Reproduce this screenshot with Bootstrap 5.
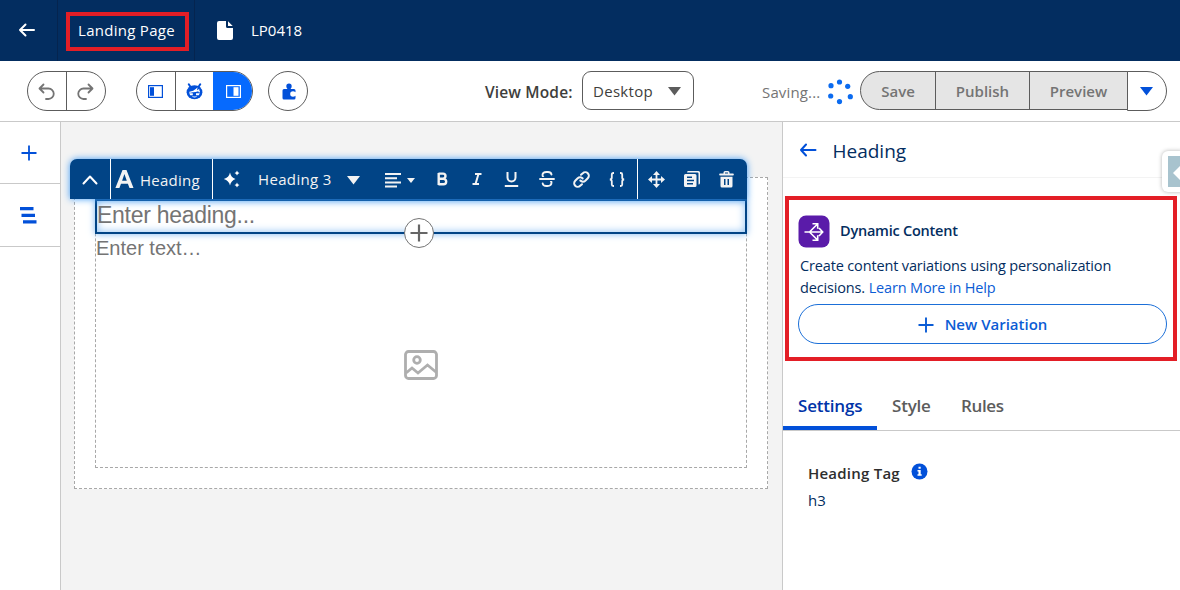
<!DOCTYPE html>
<html lang="en">
<head>
<meta charset="utf-8">
<meta name="viewport" content="width=device-width, initial-scale=1">
<title>Landing Page - LP0418</title>
<link href="https://cdn.jsdelivr.net/npm/bootstrap@5.3.0/dist/css/bootstrap.min.css" rel="stylesheet">
<style>
  body { font-family: "Open Sans", "Noto Sans", sans-serif; font-size: 15px; color: #032d60; height: 590px; overflow: hidden; letter-spacing: 0; background: #fff; line-height: 20px; }
  svg { display: block; flex: none; }
  button { font: inherit; letter-spacing: inherit; padding: 0; background: none; border: 0; color: inherit; }
  .topbar { height: 61px; background: #032d60; color: #fff; }
  .topbar .cell { height: 61px; border-right: 1px solid #05244f; }
  .topbar .back { width: 58px; padding-left: 18px; }
  .topbar .kind { width: 137px; padding: 2px 0 0 8px; }
  .callout { border: 4px solid #e31e26; }
  .kind .callout { width: 123px; height: 39px; padding: 0 2px 3px 0; letter-spacing: .28px; }
  .tools { height: 61px; border-bottom: 1px solid #c9c9c9; padding: 10px 13px 0 27px; }
  .pill { height: 40px; border: 1px solid #5c5c5c; border-radius: 20px; overflow: hidden; }
  .pill > * { height: 38px; display: flex; align-items: center; justify-content: center; }
  .pill > * + * { border-left: 1px solid #5c5c5c; }
  .mode { width: 112px; height: 39px; border: 1px solid #5c5c5c; border-radius: 9px; padding: 0 11px 0 10px; color: #3e3e3c; letter-spacing: .3px; }
  .acts button { height: 39px; background: #e5e5e5; border: 1px solid #5c5c5c; color: #747474; font-weight: 600; }
  .rail { width: 61px; border-right: 1px solid #c9c9c9; }
  .rail .item { height: 62px; border-bottom: 1px solid #c9c9c9; padding-right: 3px; }
  .rail .item + .item { height: 63px; }
  .stage { width: 721px; background: #f3f3f3; padding: 55px 14px 0 13px; }
  .frame { height: 312px; border: 1px dashed #a8a8a8; background: #fff; padding: 0 20px 20px; position: relative; }
  .inner { height: 290px; border: 1px dashed #a8a8a8; border-top: 0; position: relative; font-family: "Liberation Sans", Arial, sans-serif; color: #747474; }
  .field { height: 35px; margin: 0 -1px; border: 2px solid #014486; font-size: 23px; letter-spacing: -.28px; line-height: 29px; box-shadow: 0 0 7px #7db8f2, inset 0 0 8px #8cc0f4; }
  .blockbar { position: absolute; left: -5px; top: -19px; width: 677px; height: 40px; background: #014486; color: #f3f3f3; border-radius: 7px 7px 0 0; box-shadow: 0 0 7px #3f9bf5; z-index: 2; letter-spacing: .25px; }
  .blockbar .grp { height: 40px; border-left: 1px solid #fff; }
  .tb { width: 35px; display: flex; justify-content: center; }
  .addbtn { position: absolute; left: 308px; top: 40px; width: 30px; height: 30px; border: 1px solid #747474; border-radius: 50%; background: #fff; z-index: 3; }
  .side { width: 398px; border-left: 1px solid #c9c9c9; position: relative; }
  .sidehead { height: 56px; border-bottom: 1px solid #f3f3f3; padding: 2px 0 0 17px; font-size: 19px; }
  .dyn { height: 165px; margin: 18px 3px 0 2px; padding: 15px 6px 0 9px; }
  .desc { margin: 7px 0 5px 2px; line-height: 22px; font-size: 14.5px; letter-spacing: -.15px; }
  .newvar { width: 369px; height: 40px; border: 1px solid #1b6fd8; border-radius: 20px; color: #0b5cd5; font-weight: 600; }
  .tabs { height: 48px; margin-top: 22px; border-bottom: 1px solid #c9c9c9; font-size: 17px; font-weight: 600; color: #5c5c5c; letter-spacing: -.2px; }
  .tabs .tab { padding-top: 13px; height: 47px; white-space: nowrap; }
  .tabs .on { width: 94px; padding-left: 15px; color: #0033a8; border-bottom: 4px solid #0250d9; }
  .drawer { position: absolute; right: -6px; top: 29px; width: 24px; height: 41px; border-radius: 6px; background: #fff; box-shadow: 0 0 4px rgba(0,0,0,.3); padding: 5px 6px; }
  .drawer span { display: block; height: 31px; background: #a8c3ce; }
  .t { white-space: nowrap; }
</style>
</head>
<body class="d-flex flex-column">
<header class="topbar d-flex flex-shrink-0">
  <div class="cell back d-flex align-items-center"><svg width="18" height="16" viewBox="0 0 18 16" fill="none" stroke="#fff" stroke-width="2" stroke-linecap="round" stroke-linejoin="round" style="margin-bottom:2px"><path d="M16 8H2M7.500 2.500 2 8l5.500 5.500"/></svg></div>
  <div class="cell kind d-flex align-items-center"><div class="callout d-flex align-items-center justify-content-center"><span class="t">Landing Page</span></div></div>
  <div class="d-flex align-items-center" style="padding:0 0 1px 22px"><svg width="16" height="19" viewBox="0 0 16 19" fill="#fff"><path d="M2 0h7v5.500Q9 7 10.500 7H16v10q0 2-2 2H2q-2 0-2-2V2Q0 0 2 0zM11 .3 15.700 5H11.500q-.5 0-.5-.5z"/></svg><span class="t" style="margin-left:18px">LP0418</span></div>
</header>

<div class="tools d-flex flex-shrink-0">
  <div class="pill d-flex" style="width:79px">
    <button style="width:38px;padding:1px 1px 0 0"><svg width="17" height="18" viewBox="0 0 17 18" fill="none" stroke="#747474" stroke-width="1.800" stroke-linecap="round" stroke-linejoin="round"><path d="M5.500 1.500 1.500 5.500l4 4M2 5.500h8.500a5 5 0 0 1 0 10.500H8"/></svg></button>
    <button style="width:39px;padding:1px 1px 0 0"><svg width="17" height="18" viewBox="0 0 17 18" fill="none" stroke="#747474" stroke-width="1.800" stroke-linecap="round" stroke-linejoin="round"><path d="M11.500 1.500l4 4-4 4M15 5.500H6.500a5 5 0 0 0 0 10.500H9"/></svg></button>
  </div>
  <div class="pill d-flex" style="width:117px;margin-left:30px">
    <button style="width:38px;padding-right:1px"><svg width="15" height="13" viewBox="0 0 15 13"><rect x=".6" y=".6" width="13.800" height="11.800" fill="#fff" stroke="#0250d9" stroke-width="1.200"/><rect x="2" y="2.200" width="4" height="8.600" fill="#0250d9"/></svg></button>
    <button style="width:38px"><svg width="17" height="17" viewBox="0 0 17 17"><path d="M2.800 1.300 4.500 4M14.200 1.300 12.500 4" stroke="#0250d9" stroke-width="2" stroke-linecap="round"/><ellipse cx="8.500" cy="9.300" rx="7.900" ry="7" fill="#0250d9"/><path d="M3.400 9.300Q8 9 10.500 6.300q-.3 1.500-1 2 2-.2 3.200-1.200.2 1.500.9 2.200" stroke="#fff" stroke-width="1.300" fill="none"/><path d="M3.200 10.300h3.600v2H4.200zM10 10.300h3.800l-1 2H10zM6.500 13q2 1.200 4 0v1q-2 .8-4 0z" fill="#fff"/></svg></button>
    <button class="flex-fill" style="background:#066afe;border-color:#066afe"><svg width="15" height="13" viewBox="0 0 15 13"><rect x=".6" y=".6" width="13.800" height="11.800" fill="none" stroke="#fff" stroke-width="1.200"/><rect x="7.500" y="2.200" width="5" height="8.600" fill="#fff"/></svg></button>
  </div>
  <div class="pill" style="width:40px;margin-left:15px"><button class="w-100" style="padding-left:1px"><svg width="14" height="17" viewBox="0 0 14 17" fill="#0250d9"><path d="M2 6h3.500Q4.300 4.800 4.300 3.200a2.700 2.700 0 0 1 5.400 0Q9.700 4.800 8.500 6H12q1.500 0 1.500 1.500V9.300Q12.300 8.200 11 8.200a2.800 2.800 0 0 0 0 5.600q1.300 0 2.500-1.100V15q0 1.500-1.500 1.500H2Q.5 16.500.5 15V7.500Q.5 6 2 6z"/></svg></button></div>
  <div class="t fw-semibold" style="margin:11px 0 0 177px;width:97px;color:#3e3e3c;font-size:15.500px;letter-spacing:.15px">View Mode:</div>
  <div class="mode d-flex align-items-center justify-content-between"><span class="t">Desktop</span><svg width="15" height="9" style="margin-top:2px"><path d="M1 0h13L7.500 8.500z" fill="#5c5c5c"/></svg></div>
  <div class="t" style="margin:11px 0 0 68px;width:65px;color:#747474;letter-spacing:.15px">Saving...</div>
  <svg style="margin-top:7px" width="27" height="27" viewBox="0 0 27 27" fill="#0b6bf0"><circle cx="12.500" cy="4" r="2.600"/><circle cx="20.700" cy="8.300" r="2.600"/><circle cx="23.300" cy="18.700" r="2.600"/><circle cx="12.500" cy="23.600" r="2.600"/><circle cx="3.700" cy="18" r="2.600"/><circle cx="4" cy="7.700" r="2.600"/></svg>
  <div class="acts d-flex" style="margin-left:6px">
    <button style="width:76px;border-radius:20px 0 0 20px">Save</button>
    <button style="width:95px;margin-left:-1px">Publish</button>
    <button style="width:99px;margin-left:-1px">Preview</button>
    <button class="d-flex align-items-center justify-content-center" style="width:40px;height:40px;margin-left:-1px;border-radius:0 20px 20px 0;background:#fff"><svg width="14" height="9"><path d="M0 0h13L6.500 8.500z" fill="#0250d9"/></svg></button>
  </div>
</div>

<main class="d-flex flex-fill">
  <nav class="rail flex-shrink-0">
    <div class="item d-flex align-items-center justify-content-center"><svg width="16" height="16" stroke="#0250d9" stroke-width="1.800"><path d="M8 .5v15M.5 8h15"/></svg></div>
    <div class="item d-flex align-items-center justify-content-center" style="padding-top:1px"><svg width="17" height="17" fill="#0250d9"><path d="M0 0h13.500v3.200H0zM1.500 6.700h13.500v3.200H1.500zM3 13.300h13.500v3.200H3z"/></svg></div>
  </nav>
  <section class="stage flex-shrink-0">
    <div class="frame">
      <div class="blockbar d-flex">
        <div class="d-flex align-items-center justify-content-center" style="width:40px;padding-top:2px"><svg width="16" height="10" fill="none" stroke="#fff" stroke-width="2" stroke-linecap="round" stroke-linejoin="round"><path d="m1.500 8.500 6.500-7 6.500 7"/></svg></div>
        <div class="grp d-flex align-items-center" style="width:102px;padding-left:4px"><svg width="19" height="18" viewBox="0 0 19 18" fill="#f3f3f3"><path fill-rule="evenodd" d="M7.500 0h4L18.500 18h-4l-1.600-4.300H6L4.400 18H.4zM9.400 4 7.100 10.700h4.700z"/></svg><span class="t" style="margin-left:6px;padding-top:2px">Heading</span></div>
        <div class="grp d-flex align-items-center" style="width:425px;padding-left:10px">
          <svg width="18" height="18" viewBox="0 0 18 18" fill="#fff"><path d="M7 2.500Q8 7.500 12.500 9 8 10.500 7 15.500 6 10.500 .8 9 6 7.500 7 2.500zM14 .5q.5 2 2.500 2.500Q14.500 3.500 14 5.500 13.500 3.500 11.500 3 13.500 2.500 14 .5zM14 12.500q.5 2 2.500 2.500-2 .5-2.500 2.500-.5-2-2.500-2.500 2-.5 2.500-2.500z"/></svg>
          <span class="t" style="margin-left:17px;width:89px;letter-spacing:.35px">Heading 3</span>
          <svg width="14" height="9" style="margin-top:3px"><path d="M0 0h13L6.500 8.500z" fill="#f3f3f3"/></svg>
          <svg style="margin:2px 0 0 24px" width="17" height="15" fill="#f3f3f3"><path d="M0 0h16v2H0zM0 4.200h12v2H0zM0 8.400h16v2H0zM0 12.600h12v2H0z"/></svg>
          <svg style="margin:3px 9px 0 5px" width="8" height="5"><path d="M0 0h8L4 5z" fill="#f3f3f3"/></svg>
          <div class="tb"><svg width="12" height="14" fill="none" stroke="#f3f3f3" stroke-width="2.400"><path d="M2.500 1.600H7a2.500 2.500 0 0 1 0 5H3M2.500 6.800h5a2.700 2.700 0 0 1 0 5.400h-5M2.700 1v12"/></svg></div>
          <div class="tb"><svg width="10" height="14" fill="none" stroke="#f3f3f3" stroke-width="2"><path d="M3 2h6.500M.5 12H7M6.500 2l-3 10"/></svg></div>
          <div class="tb"><svg width="15" height="15" fill="none" stroke="#f3f3f3" stroke-width="2"><path d="M3.500 0v5.500a4 4 0 0 0 8 0V0M.8 14h13.400"/></svg></div>
          <div class="tb"><svg width="16" height="16" fill="none" stroke="#f3f3f3" stroke-width="1.900" stroke-linecap="round"><path d="M12.500 3.500Q12 1 9 1H7.500q-4 0-4 3 0 3 4.500 4h1q3.500 1 3.500 3.500 0 3.500-4 3.500H7.500Q4 15 3.700 12.500"/><path d="M0 8h16" stroke="#014486" stroke-width="4"/><path d="M1 8h14"/></svg></div>
          <div class="tb"><svg width="17" height="17" viewBox="0 0 17 17" fill="none" stroke="#f3f3f3" stroke-width="2" stroke-linecap="round"><path d="m8 3.800 1.800-1.600a3.500 3.500 0 0 1 5 5L12.300 9.700a3.500 3.500 0 0 1-5-.2M9 13.200l-1.800 1.600a3.500 3.500 0 0 1-5-5L4.700 7.300a3.500 3.500 0 0 1 5 .2"/></svg></div>
          <div class="tb"><svg width="16" height="15" fill="none" stroke="#f3f3f3" stroke-width="1.800"><path d="M5 1H4.300Q2.800 1 2.800 2.500V5.500Q2.800 7.500.8 7.500q2 0 2 2v3Q2.800 14 4.300 14H5M11 1h.7q1.500 0 1.500 1.500v3q0 2 2 2-2 0-2 2v3q0 1.500-1.500 1.500H11"/></svg></div>
        </div>
        <div class="grp d-flex align-items-center" style="width:110px;padding-left:1px">
          <div class="tb"><svg width="17" height="17" viewBox="0 0 17 17" stroke="#f3f3f3" stroke-width="1.800" fill="#f3f3f3"><path d="M8.500 2v13M2 8.500h13"/><path stroke="none" d="M8.500 0 12 4H5zM8.500 17 5 13h7zM0 8.500 4 5v7zM17 8.500 13 12V5z"/></svg></div>
          <div class="tb"><svg width="16" height="17" viewBox="0 0 16 17" fill="#f3f3f3"><path d="M4 0h10.500Q16 0 16 1.500V12q0 1.500-1.500 1.500V2.500q0-1-1-1H3Q3 0 4 0z"/><path fill-rule="evenodd" d="M1.500 3H11q1.500 0 1.500 1.500v10Q12.500 16 11 16H1.500Q0 16 0 14.500v-10Q0 3 1.500 3zM3 5.500V7h5V5.500zM3 8.800v1.500h7V8.800zM3 12v1.500h6V12z"/></svg></div>
          <div class="tb"><svg width="15" height="17" viewBox="0 0 15 17" fill="#f3f3f3"><path fill-rule="evenodd" d="M4.500 2.500V1.500Q4.500 0 6 0h3q1.500 0 1.500 1.500v1H14q.8 0 .8.800v.4q0 .8-.8.800H1Q.2 4.500.2 3.700v-.4q0-.8.800-.8zM6 2.500h3v-1H6zM1.500 5.800h12v9.200q0 1.500-1.500 1.500H3Q1.500 16.500 1.500 15zM5 8v6h1.500V8zM8.500 8v6H10V8z"/></svg></div>
        </div>
      </div>
      <div class="inner" style="padding-top:21px">
        <div class="field">Enter heading...</div>
        <div style="font-size:20px;line-height:28px">Enter text…</div>
        <div class="addbtn d-flex align-items-center justify-content-center"><svg width="18" height="18" stroke="#666" stroke-width="2.200"><path d="M9 .5v17M.5 9h17"/></svg></div>
        <div class="d-flex justify-content-center" style="margin-top:88px"><svg width="34" height="30" viewBox="0 0 34 30" fill="none" stroke="#aeaeae" stroke-width="2.800"><rect x="1.500" y="1.500" width="31" height="27" rx="3"/><circle cx="13" cy="10" r="3.300"/><path d="m2 23 6-5 6 5 9.500-8 9 7.500"/></svg></div>
      </div>
    </div>
  </section>
  <aside class="side flex-shrink-0">
    <div class="sidehead d-flex align-items-center"><svg width="17" height="14" fill="none" stroke="#0250d9" stroke-width="2" stroke-linecap="round" stroke-linejoin="round" style="margin-bottom:2px"><path d="M15.500 7H1M6 1.500 1 7l5 5.500"/></svg><span class="t" style="margin-left:15.500px">Heading</span></div>
    <div class="drawer"><span><svg width="12" height="31"><path d="M5 17 13 9v16z" fill="#fff"/></svg></span></div>
    <div class="callout dyn">
      <div class="d-flex align-items-center"><svg width="32" height="33" viewBox="0 0 32 33"><rect x=".5" y=".5" width="31" height="32" rx="7.500" fill="#5a1ba9"/><g fill="none" stroke="#fff" stroke-width="1.600"><path d="M6.500 17H24M11.500 17l7.500-7.500M11.500 17l7.500 7.500M21 13l3.700 4-3.700 4M14.500 8.800h5.200v5M14.500 25.200h5.200v-5"/></g></svg><span class="t fw-semibold" style="margin-left:10px;padding-bottom:2px;font-size:14.500px;letter-spacing:-.23px">Dynamic Content</span></div>
      <div class="desc"><span class="t">Create content variations using personalization</span><br><span class="t">decisions. <span style="color:#0b5cd5">Learn More in Help</span></span></div>
      <button class="newvar d-flex align-items-center justify-content-center"><svg width="16" height="16" stroke="#0b5cd5" stroke-width="1.900" style="margin-right:11px;margin-top:2px"><path d="M8 .5v15M.5 8h15"/></svg>New Variation</button>
    </div>
    <div class="tabs d-flex"><div class="tab on">Settings</div><div class="tab" style="width:69px;padding-left:15px">Style</div><div class="tab" style="padding-left:15px;letter-spacing:-.35px">Rules</div></div>
    <div style="padding:32px 0 0 25px">
      <div class="d-flex fw-semibold" style="color:#2e2e2e;letter-spacing:.23px"><span class="t">Heading Tag</span><svg style="margin:0 0 0 11px" width="17" height="17" viewBox="0 0 17 17"><circle cx="8.500" cy="8.500" r="8" fill="#0250d9"/><path d="M7.500 3.800h2.200v2H7.500zM6.500 7h3.200v4.200h1v1.500H6.500v-1.500h1V8.500h-1z" fill="#fff"/></svg></div>
      <div style="margin-top:7px">h3</div>
    </div>
  </aside>
</main>
<script src="https://cdn.jsdelivr.net/npm/bootstrap@5.3.0/dist/js/bootstrap.bundle.min.js"></script>
</body>
</html>
